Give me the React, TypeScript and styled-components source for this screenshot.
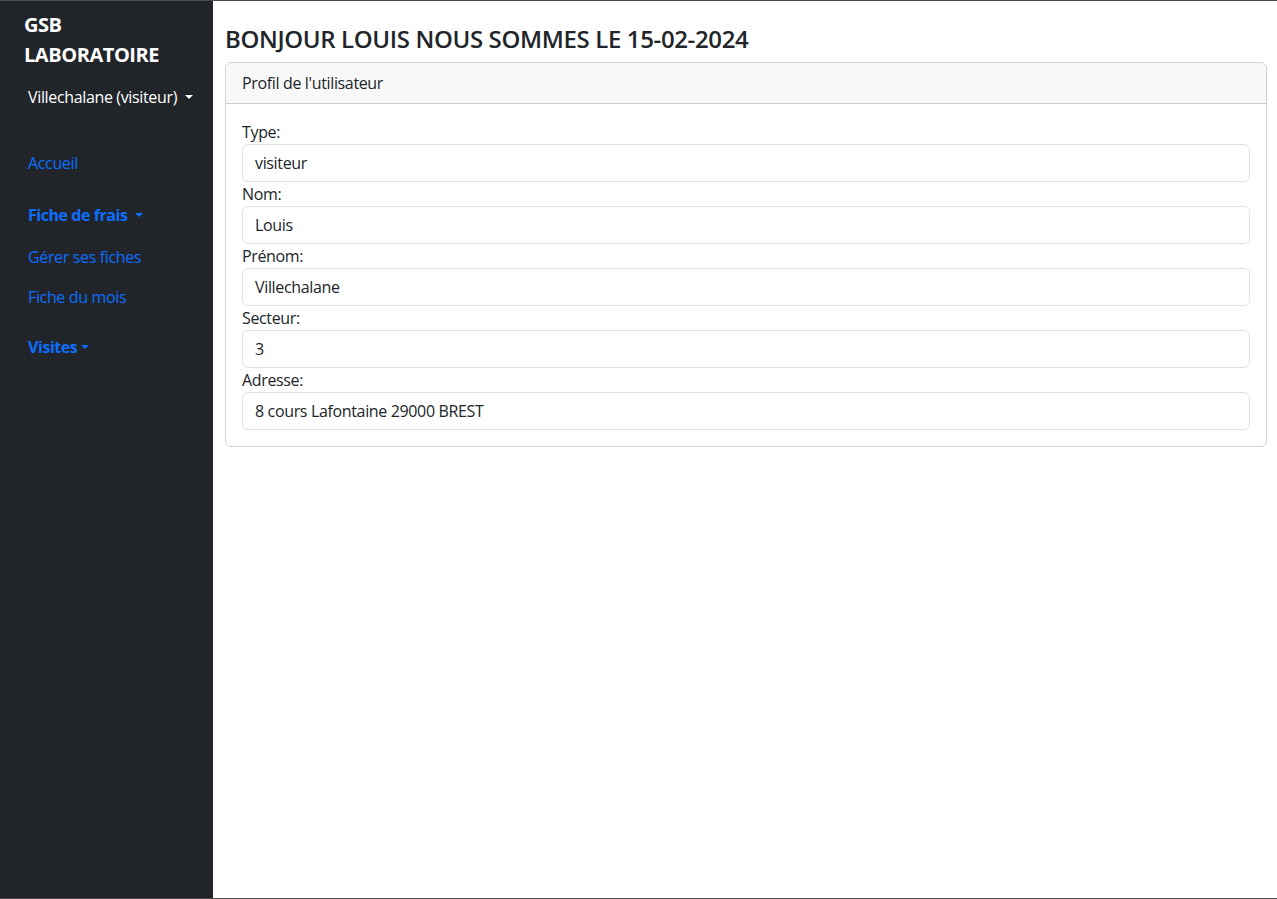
import React from "react";
import styled, { createGlobalStyle } from "styled-components";

const GlobalStyle = createGlobalStyle`
  * { box-sizing: border-box; }
  html, body { margin: 0; padding: 0; }
  body {
    font-family: "Open Sans", "Noto Sans", "Liberation Sans", sans-serif;
    font-size: 16px;
    line-height: 1.5;
    letter-spacing: -0.35px;
    color: #212529;
    background: #fff;
  }
`;

const Page = styled.div`
  display: flex;
  height: 899px;
  border-top: 1px solid #4b4b4b;
  border-bottom: 1px solid #4b4b4b;
`;

const Sidebar = styled.nav`
  width: 213px;
  flex-shrink: 0;
  background: #212529;
  padding: 9px 8px 0 24px;
  display: flex;
  flex-direction: column;
`;

const Brand = styled.div`
  color: #fff;
  font-weight: 700;
  font-size: 20px;
  line-height: 30px;
  letter-spacing: -0.45px;
`;

const Caret = styled.span<{ $small?: boolean }>`
  display: inline-block;
  margin-left: ${(p) => (p.$small ? "4px" : "8px")};
  vertical-align: 4px;
  border-top: 4.8px solid currentColor;
  border-left: 4.8px solid transparent;
  border-right: 4.8px solid transparent;
`;

const UserToggle = styled.div`
  color: #fff;
  margin: 15px 0 0 4px;
  line-height: 24px;
  white-space: nowrap;
`;

const NavList = styled.div`
  display: flex;
  flex-direction: column;
  margin-top: 34px;
  padding-left: 4px;
`;

const NavLink = styled.a<{ $bold?: boolean; $top?: number }>`
  display: block;
  color: #0d6efd;
  text-decoration: none;
  padding: 8px 0;
  line-height: 24px;
  white-space: nowrap;
  font-weight: ${(p) => (p.$bold ? 700 : 400)};
  letter-spacing: ${(p) => (p.$bold ? "-0.45px" : "-0.35px")};
  margin-top: ${(p) => p.$top ?? 0}px;
`;

const Main = styled.main`
  flex: 1;
  padding: 24px 10px 0 12px;
`;

const Title = styled.h4`
  margin: 0 0 8px;
  font-size: 24px;
  font-weight: 600;
  line-height: 1.2;
  letter-spacing: -0.36px;
`;

const Card = styled.section`
  border: 1px solid rgba(0, 0, 0, 0.175);
  border-radius: 6px;
  overflow: hidden;
`;

const CardHeader = styled.div`
  padding: 8px 16px;
  background: rgba(33, 37, 41, 0.03);
  border-bottom: 1px solid rgba(0, 0, 0, 0.175);
  line-height: 24px;
`;

const CardBody = styled.div`
  padding: 16px;
`;

const Label = styled.label`
  display: block;
  line-height: 24px;
`;

const Field = styled.div`
  height: 38px;
  padding: 6px 12px;
  border: 1px solid #dee2e6;
  border-radius: 6px;
  line-height: 24px;
  background: #fff;
`;

const fields: [string, string][] = [
  ["Type:", "visiteur"],
  ["Nom:", "Louis"],
  ["Prénom:", "Villechalane"],
  ["Secteur:", "3"],
  ["Adresse:", "8 cours Lafontaine 29000 BREST"],
];

export default function App() {
  return (
    <>
      <GlobalStyle />
      <Page>
        <Sidebar>
          <Brand>
            GSB
            <br />
            LABORATOIRE
          </Brand>
          <UserToggle>
            Villechalane (visiteur)
            <Caret />
          </UserToggle>
          <NavList>
            <NavLink href="#">Accueil</NavLink>
            <NavLink href="#" $bold $top={12}>
              Fiche de frais
              <Caret />
            </NavLink>
            <NavLink href="#" $top={2}>
              Gérer ses fiches
            </NavLink>
            <NavLink href="#">Fiche du mois</NavLink>
            <NavLink href="#" $bold $top={10}>
              Visites
              <Caret $small />
            </NavLink>
          </NavList>
        </Sidebar>
        <Main>
          <Title>BONJOUR LOUIS NOUS SOMMES LE 15-02-2024</Title>
          <Card>
            <CardHeader>Profil de l'utilisateur</CardHeader>
            <CardBody>
              {fields.map(([label, value]) => (
                <div key={label}>
                  <Label>{label}</Label>
                  <Field>{value}</Field>
                </div>
              ))}
            </CardBody>
          </Card>
        </Main>
      </Page>
    </>
  );
}
